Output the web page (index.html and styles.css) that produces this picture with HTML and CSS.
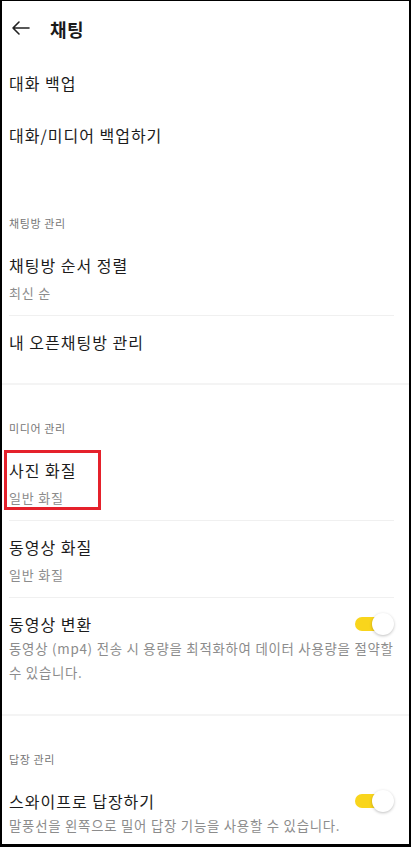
FILE: index.html
```html
<!DOCTYPE html>
<html>
<head>
  <meta charset="utf-8">
  <title>채팅 설정</title>
  <link rel="stylesheet" href="styles.css">
</head>
<body>

  <div class="screen">

    <!-- App Bar -->
    <header class="app-bar">
      <button class="back-btn" aria-label="뒤로">
        <svg width="20" height="20" viewBox="0 0 20 20">
          <path d="M2 10H18M8 4L2 10L8 16" fill="none" stroke="#222" stroke-width="1.6" stroke-linecap="round" stroke-linejoin="round"/>
        </svg>
      </button>
      <h1 class="app-title">채팅</h1>
    </header>

    <!-- Backup -->
    <section class="group first">
      <div class="item plain"><div class="item-title">대화 백업</div></div>
      <div class="item plain"><div class="item-title">대화/미디어 백업하기</div></div>
    </section>

    <!-- Chat Rooms -->
    <section class="group">
      <div class="group-label">채팅방 관리</div>
      <div class="item">
        <div class="item-title">채팅방 순서 정렬</div>
        <div class="item-sub">최신 순</div>
      </div>
      <div class="item"><div class="item-title">내 오픈채팅방 관리</div></div>
    </section>

    <!-- Media -->
    <section class="group">
      <div class="group-label">미디어 관리</div>
      <div class="item highlighted">
        <div class="item-title">사진 화질</div>
        <div class="item-sub">일반 화질</div>
        <span class="highlight-box"></span>
      </div>
      <div class="item">
        <div class="item-title">동영상 화질</div>
        <div class="item-sub">일반 화질</div>
      </div>
      <div class="item">
        <div class="item-row">
          <div class="item-title">동영상 변환</div>
          <span class="toggle on"><span class="toggle-track"></span><span class="toggle-knob"></span></span>
        </div>
        <div class="item-desc">동영상 (mp4) 전송 시 용량을 최적화하여 데이터 사용량을 절약할 수 있습니다.</div>
      </div>
    </section>

    <!-- Reply -->
    <section class="group">
      <div class="group-label">답장 관리</div>
      <div class="item">
        <div class="item-row">
          <div class="item-title">스와이프로 답장하기</div>
          <span class="toggle on"><span class="toggle-track"></span><span class="toggle-knob"></span></span>
        </div>
        <div class="item-desc">말풍선을 왼쪽으로 밀어 답장 기능을 사용할 수 있습니다.</div>
      </div>
    </section>

  </div>

</body>
</html>
```

FILE: styles.css
```css
body {
  margin: 0;
  padding: 0;
  background-color: #000;
  font-family: 'Noto Sans CJK KR', 'Noto Sans', sans-serif;
  color: #1e1e1e;
  overflow: hidden;
}

.screen {
  margin: 1px 2px 0 2px;
  width: 407px;
  height: 843px;
  background-color: #fff;
  overflow: hidden;
}

/* App Bar */
.app-bar {
  height: 56px;
  display: flex;
  align-items: center;
  padding-left: 9px;
}

.back-btn {
  width: 20px;
  height: 20px;
  padding: 0;
  margin: -3px 19px 0 0;
  border: none;
  background: none;
  display: flex;
}

.app-title {
  margin: 0;
  font-size: 18px;
  font-weight: 700;
  letter-spacing: 0.5px;
  color: #1a1a1a;
}

/* Groups */
.group {
  padding-bottom: 17px;
  border-bottom: 2px solid #f4f4f4;
}

.group:last-child {
  border-bottom: none;
}

.group.first {
  border-bottom-color: #fff;
}

.group-label {
  padding: 35px 7px 8px;
  font-size: 11px;
  line-height: 16px;
  letter-spacing: 0.6px;
  color: #767676;
}

/* Items */
.item {
  margin: 0 15px 0 7px;
  padding: 15px 0 12px;
  border-bottom: 1px solid #f0f0f0;
}

.item:last-child {
  border-bottom: none;
  padding-bottom: 13px;
}

.item.plain {
  padding: 15px 0;
  border-bottom: none;
}

.item-title {
  font-size: 16px;
  line-height: 22px;
  letter-spacing: 1px;
  color: #1c1c1c;
}

.item-sub {
  margin-top: 7px;
  font-size: 13px;
  line-height: 20px;
  letter-spacing: 0.8px;
  color: #8c8c8c;
}

.item-row {
  display: flex;
  align-items: center;
  justify-content: space-between;
}

.item-desc {
  margin-top: 1px;
  font-size: 13.4px;
  line-height: 24px;
  letter-spacing: 0.75px;
  color: #8c8c8c;
}

/* Toggle */
.toggle {
  position: relative;
  width: 39px;
  height: 22px;
  flex-shrink: 0;
}

.toggle-track {
  position: absolute;
  left: 0;
  top: 4px;
  width: 34px;
  height: 14px;
  border-radius: 7px;
  background-color: #f9d51c;
}

.toggle-knob {
  position: absolute;
  right: 0;
  top: 0;
  width: 22px;
  height: 22px;
  border-radius: 50%;
  background-color: #fff;
  box-shadow: 0 1px 3px rgba(0,0,0,0.25);
}

/* Red annotation box */
.highlighted {
  position: relative;
}

.highlight-box {
  position: absolute;
  left: -5px;
  top: 6px;
  width: 97px;
  height: 60px;
  box-sizing: border-box;
  border: 3px solid #e5212b;
}
```
